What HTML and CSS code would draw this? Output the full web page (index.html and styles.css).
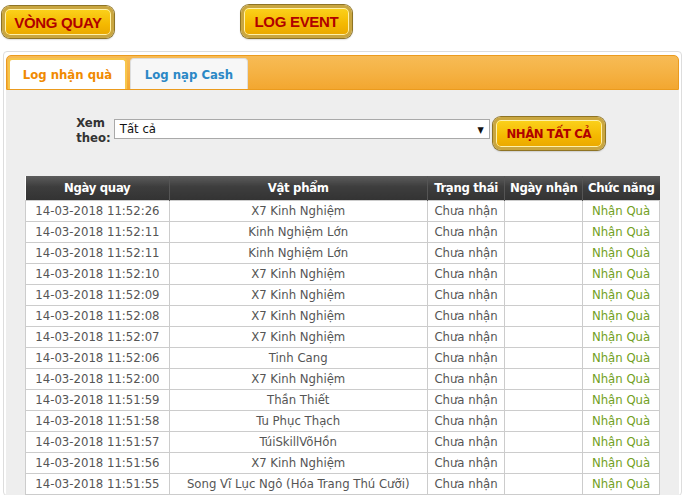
FILE: index.html
```html
<!DOCTYPE html>
<html lang="vi">
<head>
  <meta charset="UTF-8" />
  <title>Log nhận quà</title>
  <link rel="stylesheet" href="styles.css">
</head>
<body>
  <div class="top">
    <a href="#" class="gold-btn">VÒNG QUAY</a>
    <a href="#" class="gold-btn btn-log">LOG EVENT</a>
  </div>

  <div class="panel">
    <div class="tabbar">
      <a href="#" class="tab active">Log nhận quà</a>
      <a href="#" class="tab">Log nạp Cash</a>
    </div>

    <div class="content">
      <div class="filter">
        <label class="filter-label">Xem<br>theo:</label>
        <div class="select">Tất cả<span class="arrow">▼</span></div>
        <a href="#" class="gold-btn btn-all">NHẬN TẤT CẢ</a>
      </div>

      <table class="log">
        <thead>
          <tr>
            <th class="c1">Ngày quay</th>
            <th class="c2">Vật phẩm</th>
            <th class="c3">Trạng thái</th>
            <th class="c4">Ngày nhận</th>
            <th class="c5">Chức năng</th>
          </tr>
        </thead>
        <tbody>
          <tr><td>14-03-2018 11:52:26</td><td>X7 Kinh Nghiệm</td><td>Chưa nhận</td><td></td><td><a href="#">Nhận Quà</a></td></tr>
          <tr><td>14-03-2018 11:52:11</td><td>Kinh Nghiệm Lớn</td><td>Chưa nhận</td><td></td><td><a href="#">Nhận Quà</a></td></tr>
          <tr><td>14-03-2018 11:52:11</td><td>Kinh Nghiệm Lớn</td><td>Chưa nhận</td><td></td><td><a href="#">Nhận Quà</a></td></tr>
          <tr><td>14-03-2018 11:52:10</td><td>X7 Kinh Nghiệm</td><td>Chưa nhận</td><td></td><td><a href="#">Nhận Quà</a></td></tr>
          <tr><td>14-03-2018 11:52:09</td><td>X7 Kinh Nghiệm</td><td>Chưa nhận</td><td></td><td><a href="#">Nhận Quà</a></td></tr>
          <tr><td>14-03-2018 11:52:08</td><td>X7 Kinh Nghiệm</td><td>Chưa nhận</td><td></td><td><a href="#">Nhận Quà</a></td></tr>
          <tr><td>14-03-2018 11:52:07</td><td>X7 Kinh Nghiệm</td><td>Chưa nhận</td><td></td><td><a href="#">Nhận Quà</a></td></tr>
          <tr><td>14-03-2018 11:52:06</td><td>Tinh Cang</td><td>Chưa nhận</td><td></td><td><a href="#">Nhận Quà</a></td></tr>
          <tr><td>14-03-2018 11:52:00</td><td>X7 Kinh Nghiệm</td><td>Chưa nhận</td><td></td><td><a href="#">Nhận Quà</a></td></tr>
          <tr><td>14-03-2018 11:51:59</td><td>Thần Thiết</td><td>Chưa nhận</td><td></td><td><a href="#">Nhận Quà</a></td></tr>
          <tr><td>14-03-2018 11:51:58</td><td>Tu Phục Thạch</td><td>Chưa nhận</td><td></td><td><a href="#">Nhận Quà</a></td></tr>
          <tr><td>14-03-2018 11:51:57</td><td>TúiSkillVõHồn</td><td>Chưa nhận</td><td></td><td><a href="#">Nhận Quà</a></td></tr>
          <tr><td>14-03-2018 11:51:56</td><td>X7 Kinh Nghiệm</td><td>Chưa nhận</td><td></td><td><a href="#">Nhận Quà</a></td></tr>
          <tr><td>14-03-2018 11:51:55</td><td>Song Vĩ Lục Ngô (Hóa Trang Thú Cưỡi)</td><td>Chưa nhận</td><td></td><td><a href="#">Nhận Quà</a></td></tr>
        </tbody>
      </table>
    </div>
  </div>
</body>
</html>
```

FILE: styles.css
```css
* { box-sizing: border-box; }
body {
  margin: 0;
  background: #fff;
  font-family: "DejaVu Sans Condensed", "DejaVu Sans", sans-serif;
  font-size: 13px;
  color: #555;
}
a { text-decoration: none; }

.top {
  display: flex;
  align-items: flex-start;
  height: 51px;
  padding: 6px 0 0 2px;
}
.gold-btn {
  display: flex;
  align-items: center;
  justify-content: center;
  height: 32px;
  border: 3px solid #c9a640;
  border-radius: 8px;
  background: linear-gradient(#fbd21c, #f4b800 60%, #eaa800);
  box-shadow: 0 0 0 1px #8f7424, inset 0 0 0 1px #fff1a8, 0 1px 2px rgba(0,0,0,0.4);
  color: #b00000;
  font-family: "Liberation Sans", Arial, sans-serif;
  font-weight: bold;
  font-size: 15px;
  letter-spacing: -0.3px;
}
.top .gold-btn { width: 112px; }
.top .btn-log { margin-left: 127px; width: 111px; margin-top: -1px; height: 33px; }

.panel {
  margin: 0 3px;
  border: 1px solid #ddd;
  border-radius: 4px;
  padding: 3px 2px 0;
  background: #fff;
}
.tabbar {
  display: flex;
  align-items: flex-end;
  gap: 3px;
  height: 35px;
  padding-left: 1px;
  border: 1px solid #eb9b1e;
  border-radius: 5px 5px 0 0;
  background: linear-gradient(#f7bb55, #f5b244 50%, #f3a730);
}
.tab {
  display: flex;
  align-items: center;
  justify-content: center;
  height: 31px;
  width: 118px;
  border: 1px solid #ddd;
  border-bottom: none;
  border-radius: 4px 4px 0 0;
  background: #f7f7f7;
  color: #2b88c6;
  font-weight: bold;
  font-size: 13px;
}
.tab.active {
  width: 119px;
  background: #fff;
  border: 2px solid #f7c64a;
  border-bottom: none;
  color: #f08a00;
}

.content {
  background: #eee;
  padding: 27px 19px 0;
}
.filter {
  display: flex;
  align-items: flex-start;
  justify-content: center;
  gap: 3px;
  padding-right: 4px;
}
.filter-label {
  font-weight: bold;
  font-size: 13px;
  line-height: 15px;
  color: #333;
  margin-top: -2px;
}
.select {
  position: relative;
  width: 376px;
  height: 20px;
  margin-top: 2px;
  border: 1px solid #a9a9a9;
  background: #fff;
  color: #111;
  padding: 1px 5px;
  font-size: 13px;
  line-height: 16px;
}
.select .arrow {
  position: absolute;
  right: 5px;
  top: 2px;
  font-size: 9px;
  color: #111;
}
.btn-all {
  width: 112px;
  height: 33px;
  font-family: "DejaVu Sans Condensed", sans-serif;
  font-size: 13px;
  letter-spacing: -0.4px;
}

table.log {
  width: 635px;
  margin-top: 26px;
  border-collapse: collapse;
  background: #fff;
}
.log th {
  height: 24px;
  padding: 0;
  background: linear-gradient(#5c5c5c, #3d3d3d 45%, #333);
  color: #fff;
  font-weight: bold;
  font-size: 13px;
  border-left: 1px solid #555;
  letter-spacing: -0.3px;
}
.log th:first-child { border-left: none; }
.log .c1 { width: 144px; }
.log .c2 { width: 258px; }
.log .c3 { width: 78px; }
.log .c4 { width: 78px; }
.log .c5 { width: 77px; }
.log td {
  height: 21px;
  padding: 0;
  text-align: center;
  border: 1px solid #ccc;
  white-space: nowrap;
}
.log td a { color: #72a023; }
```
